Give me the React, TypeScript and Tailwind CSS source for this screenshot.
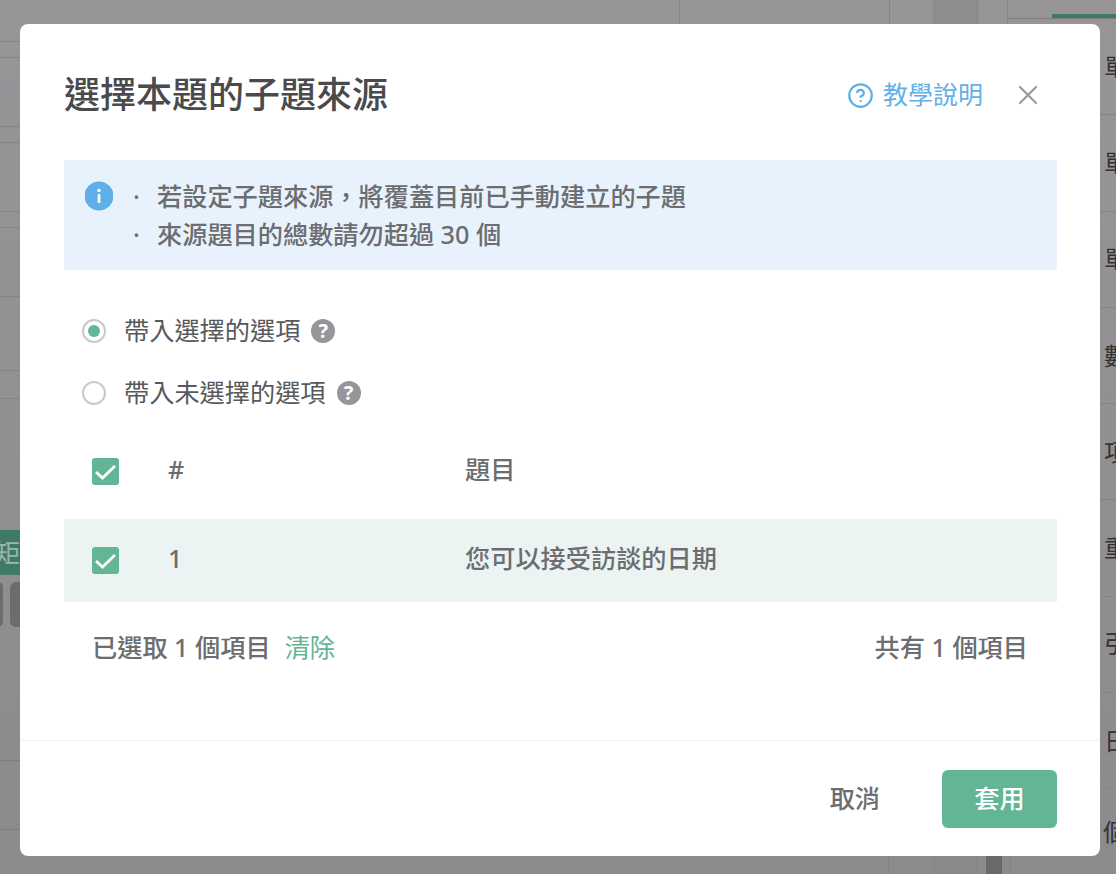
import { CircleHelp, X } from "lucide-react";

const leftGaps = [42, 16, 69, 16, 69, 16, 69, 74, 28];
const rightRows = ["單", "單", "單", "數", "項", "重", "引", "日"];

function Checkbox() {
  return (
    <span className="flex h-[27px] w-[27px] items-center justify-center rounded-[3px] bg-[#62b595]">
      <svg width="27" height="27" viewBox="0 0 27 27" fill="none">
        <path d="M4 14 L10.5 20 L23 8" stroke="#fff" strokeWidth="2.8" />
      </svg>
    </span>
  );
}

function HelpBadge() {
  return (
    <span className="flex h-6 w-6 items-center justify-center rounded-full bg-[#97959a] text-[20px] leading-6 font-bold text-white">
      ?
    </span>
  );
}

function RadioRow({ label, checked }: { label: string; checked?: boolean }) {
  return (
    <label className="flex h-[62px] items-center pl-[18px]">
      <span className="flex h-6 w-6 items-center justify-center rounded-full border-[2.5px] border-[#c9c8cb] bg-white">
        {checked && <span className="h-3 w-3 rounded-full bg-[#62b595]" />}
      </span>
      <span className="mb-[3px] ml-[18px] text-[25.2px] leading-8 text-[#58595b]">{label}</span>
      <span className="ml-[11px]">
        <HelpBadge />
      </span>
    </label>
  );
}

function Backdrop() {
  return (
    <div className="flex h-full w-full bg-linear-to-b from-[#979598] to-[#8c8a8d]">
      <div className="flex w-5 shrink-0 flex-col overflow-hidden">
        {leftGaps.map((h, i) => (
          <div key={i} className="shrink-0 border-b border-[#858386]" style={{ height: h }} />
        ))}
        <div className="h-[131px] shrink-0" />
        <div className="flex h-[45px] shrink-0 items-center justify-end bg-[#3f7a66] text-[25px] whitespace-nowrap text-[#9db5ab]">
          矩
        </div>
        <div className="mt-[7px] flex h-[45px] shrink-0 gap-[7px]">
          <div className="ml-[-7px] w-[10px] shrink-0 rounded-md bg-[#6d6b6e]" />
          <div className="w-[20px] shrink-0 rounded-md bg-[#6d6b6e]" />
        </div>
        <div className="h-[134px] shrink-0 border-b border-[#7f7d80]" />
        <div className="h-[69px] shrink-0 border-b border-[#7f7d80]" />
      </div>

      <div className="flex flex-1 flex-col justify-between">
        <div className="flex h-6">
          <div className="w-[660px] border-r border-[#858386]" />
          <div className="w-[210px] border-r border-[#858386]" />
          <div className="w-[43px]" />
          <div className="w-[45px] border-r border-[#858386] bg-[#8e8c8f]" />
          <div className="w-[30px] border-r border-[#858386]" />
          <div className="flex h-[19px] flex-1 justify-end border-b border-[#7f7d80]">
            <div className="mt-[14px] h-1 w-12 bg-[#3f7a66]" />
          </div>
        </div>
        <div className="flex h-[18px]">
          <div className="w-[660px]" />
          <div className="w-[209px] border-r border-[#858386]" />
          <div className="w-[44px]" />
          <div className="w-[45px] border-r border-[#858386] bg-[#8a888b]" />
          <div className="ml-2 w-4 bg-[#6b696c]" />
          <div className="ml-2 w-0 border-r border-[#858386]" />
        </div>
      </div>

      <div className="flex w-4 shrink-0 flex-col overflow-hidden">
        <div className="h-[19px] shrink-0 border-b border-[#7f7d80] pt-[14px]">
          <div className="h-1 bg-[#3f7a66]" />
        </div>
        {rightRows.map((c, i) => (
          <div
            key={i}
            className="flex h-[96.3px] shrink-0 items-center border-b border-[#858386] pl-1 text-[24px] whitespace-nowrap text-[#323133]"
          >
            {c}
          </div>
        ))}
        <div className="flex flex-1 items-center pl-[3px] text-[24px] whitespace-nowrap text-[#323133]">個</div>
      </div>
    </div>
  );
}

export default function App() {
  return (
    <div
      lang="zh-Hant"
      className="relative h-[874px] w-[1116px] overflow-hidden [font-family:'Noto_Sans','Noto_Sans_CJK_TC',sans-serif]"
    >
      <Backdrop />
      <div className="absolute top-6 left-5 flex h-[832px] w-[1080px] flex-col rounded-lg bg-white">
        <div className="flex items-start justify-between pt-[47px] pr-[56px] pb-[41px] pl-[44px]">
          <h2 className="text-[36px] leading-[48px] font-medium text-[#4a4a4c]">選擇本題的子題來源</h2>
          <div className="flex h-12 items-center">
            <a className="flex items-center gap-[9px] text-[25px] text-[#63b0e6]">
              <CircleHelp size={27} strokeWidth={2} />
              教學說明
            </a>
            <button className="ml-[29px] text-[#9a9a9c]">
              <X size={32} strokeWidth={1.6} />
            </button>
          </div>
        </div>

        <div className="mr-[43px] ml-[44px] flex h-[110px] items-start bg-[#e8f2fc] pt-[17px] pl-[21px] text-[25.2px] leading-[38px] font-medium text-[#6b6d70]">
          <svg width="28" height="38" viewBox="0 0 28 38" className="shrink-0">
            <circle cx="14" cy="19" r="14.5" fill="#5fb0e8" />
            <circle cx="14" cy="13.5" r="1.7" fill="#fff" />
            <rect x="12.6" y="17" width="2.8" height="9" rx="1" fill="#fff" />
          </svg>
          <ul className="ml-5">
            <li className="flex">
              <span className="w-[24px] shrink-0 text-left">·</span>若設定子題來源，將覆蓋目前已手動建立的子題
            </li>
            <li className="flex">
              <span className="w-[24px] shrink-0 text-left">·</span>來源題目的總數請勿超過 30 個
            </li>
          </ul>
        </div>

        <div className="mt-[30px] mr-[43px] ml-[44px]">
          <RadioRow label="帶入選擇的選項" checked />
          <RadioRow label="帶入未選擇的選項" />

          <div className="grid h-[95px] grid-cols-[104px_297px_1fr] items-center text-[25.2px] font-medium text-[#6b6d70]">
            <div className="pl-[28px]">
              <Checkbox />
            </div>
            <div className="pb-[3px]">#</div>
            <div className="pb-[3px]">題目</div>
          </div>
          <div className="grid h-[83px] grid-cols-[104px_297px_1fr] items-center bg-[#ebf4f2] text-[25.2px] font-medium text-[#6b6d70]">
            <div className="pl-[28px]">
              <Checkbox />
            </div>
            <div className="pb-[3px]">1</div>
            <div className="pb-[3px]">您可以接受訪談的日期</div>
          </div>

          <div className="flex h-[92px] items-center justify-between pr-[29px] pl-[28px] text-[25.2px] font-medium text-[#6b6d70]">
            <div className="flex items-center">
              已選取 1 個項目
              <a className="ml-[14px] font-normal text-[#62b595]">清除</a>
            </div>
            <div>共有 1 個項目</div>
          </div>
        </div>

        <div className="mt-auto flex h-[116px] items-center justify-end gap-[62px] border-t border-[#efeff1] pr-[43px]">
          <button className="text-[25.2px] font-medium text-[#6b6d70]">取消</button>
          <button className="h-[58px] w-[115px] rounded-md bg-[#62b595] text-[25.2px] font-medium text-white">
            套用
          </button>
        </div>
      </div>
    </div>
  );
}
